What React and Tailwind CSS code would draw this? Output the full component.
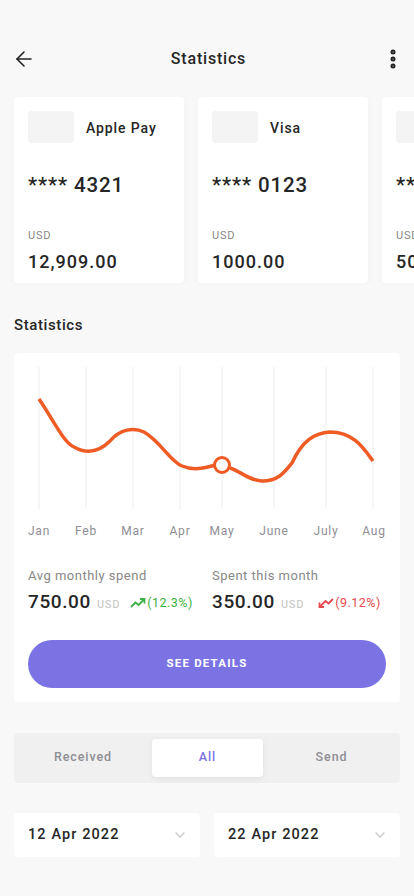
import { ArrowLeft, MoreVertical, ChevronDown } from 'lucide-react'

const cards = [
  { name: 'Apple Pay', num: '**** 4321', amount: '12,909.00' },
  { name: 'Visa', num: '**** 0123', amount: '1000.00' },
  { name: 'Master', num: '**** 7788', amount: '500.00' },
]

const months = ['Jan', 'Feb', 'Mar', 'Apr', 'May', 'June', 'July', 'Aug']
// x positions relative to the chart card (card starts at x=14)
const gridX = [25, 72, 119, 166, 208, 260, 312, 359]

export default function App() {
  return (
    <div className="min-h-[896px] w-[414px] bg-[#f8f8f8] overflow-hidden font-['Roboto',sans-serif] text-[#262626]">
      {/* Header */}
      <div className="flex items-center justify-between h-[58px] mt-[30px] px-3">
        <ArrowLeft className="w-[24px] h-[24px] text-[#222]" strokeWidth={1.6} />
        <h1 className="text-[16px] font-medium tracking-[0.8px]">Statistics</h1>
        <MoreVertical className="w-[24px] h-[24px] -mr-[3px] text-[#222]" strokeWidth={3} />
      </div>

      {/* Cards */}
      <div className="flex gap-[14px] pl-[14px] mt-[9px] overflow-hidden">
        {cards.map((c) => (
          <div key={c.name} className="shrink-0 w-[170px] h-[186px] bg-white rounded-[4px] shadow-[0_2px_8px_rgba(0,0,0,0.03)] px-[14px] pt-[14px]">
            <div className="flex items-center gap-3">
              <div className="w-[46px] h-[32px] rounded-[4px] bg-[#f4f4f4]" />
              <span className="mt-[2px] text-[14px] font-medium tracking-[0.9px] whitespace-nowrap">{c.name}</span>
            </div>
            <p className="mt-[30px] text-[20.5px] font-medium tracking-[0.9px] leading-[24px] whitespace-nowrap">{c.num}</p>
            <p className="mt-[31px] text-[11px] tracking-[0.8px] text-[#888]">USD</p>
            <p className="mt-[3px] text-[18px] font-medium tracking-[1px] whitespace-nowrap">{c.amount}</p>
          </div>
        ))}
      </div>

      {/* Statistics */}
      <h2 className="mt-[31px] px-[14px] text-[15px] font-medium tracking-[0.6px]">Statistics</h2>

      <div className="mx-[14px] mt-[16px] bg-white rounded-[4px] pb-[14px]">
        <div className="relative h-[200px]">
          <svg className="absolute inset-0" width="386" height="200" viewBox="0 0 386 200">
            {gridX.map((x) => (
              <line key={x} x1={x} y1="14" x2={x} y2="156" stroke="#f3f3f3" strokeWidth="1.5" />
            ))}
            <path
              d="M25 46 C40 68, 50 90, 60 94 C74 102, 86 98, 96 88 C106 76, 120 74, 130 79 C146 88, 156 108, 168 113 C182 119, 196 113, 202 112 M216 115 C226 118, 236 128, 248 128 C264 128, 270 120, 278 110 C288 88, 300 80, 316 79 C340 79, 350 96, 359 108"
              fill="none"
              stroke="#ef5b25"
              strokeWidth="3.5"
            />
            <circle cx="208" cy="112" r="7.5" fill="white" stroke="#ef5b25" strokeWidth="3" />
          </svg>
          <div className="absolute left-0 right-0 top-[169px] h-[16px]">
            {months.map((m, i) => (
              <span
                key={m}
                className="absolute text-[12px] tracking-[0.8px] text-[#8e8e94] -translate-x-1/2"
                style={{ left: gridX[i] + (i === 7 ? 1 : 0) }}
              >
                {m}
              </span>
            ))}
          </div>
        </div>

        <div className="flex px-[14px] mt-[13px]">
          <div className="w-[184px]">
            <p className="text-[13px] tracking-[0.5px] text-[#888]">Avg monthly spend</p>
            <div className="flex items-baseline mt-[3px]">
              <span className="text-[19px] font-medium tracking-[0.6px]">750.00</span>
              <span className="ml-[6px] text-[11px] tracking-[0.8px] text-[#c4c4c4]">USD</span>
              <span className="ml-[10px] flex items-center text-[12.5px] tracking-[0.5px] text-[#3cb043]">
                <svg width="16" height="10" viewBox="0 0 16 10" className="mr-[1px]">
                  <path d="M1 9 L5.5 4.5 L8.5 7 L14 1.5" fill="none" stroke="#3cb043" strokeWidth="1.8" />
                  <path d="M10 1 H14.5 V5.5" fill="none" stroke="#3cb043" strokeWidth="1.8" />
                </svg>
                (12.3%)
              </span>
            </div>
          </div>
          <div>
            <p className="text-[13px] tracking-[0.5px] text-[#888]">Spent this month</p>
            <div className="flex items-baseline mt-[3px]">
              <span className="text-[19px] font-medium tracking-[0.6px]">350.00</span>
              <span className="ml-[6px] text-[11px] tracking-[0.8px] text-[#c4c4c4]">USD</span>
              <span className="ml-[14px] flex items-center text-[12.5px] tracking-[0.5px] text-[#e5484d]">
                <svg width="16" height="10" viewBox="0 0 16 10" className="mr-[1px]">
                  <path d="M15 1 L10.5 5.5 L7.5 3 L2 8.5" fill="none" stroke="#e5484d" strokeWidth="1.8" />
                  <path d="M6 9 H1.5 V4.5" fill="none" stroke="#e5484d" strokeWidth="1.8" />
                </svg>
                (9.12%)
              </span>
            </div>
          </div>
        </div>

        <button className="mx-[14px] mt-[23px] w-[358px] h-[48px] rounded-full bg-[#7b73e3] text-white text-[11.5px] font-bold tracking-[1.2px]">
          SEE DETAILS
        </button>
      </div>

      {/* Tabs */}
      <div className="mx-[14px] mt-[31px] h-[50px] bg-[#f0f0f0] rounded-[4px] grid grid-cols-[138px_111px_1fr] items-center">
        <span className="text-center text-[12.5px] font-medium tracking-[0.9px] text-[#8e8e94]">Received</span>
        <span className="h-[38px] flex items-center justify-center bg-white rounded-[4px] shadow-[0_2px_6px_rgba(0,0,0,0.06)] text-[12.5px] font-medium tracking-[0.9px] text-[#7b73e3]">All</span>
        <span className="text-center text-[12.5px] font-medium tracking-[0.9px] text-[#8e8e94]">Send</span>
      </div>

      {/* Date range */}
      <div className="mx-[14px] mt-[30px] grid grid-cols-2 gap-[14px]">
        {['12 Apr 2022', '22 Apr 2022'].map((d) => (
          <div key={d} className="h-[44px] bg-white rounded-[4px] flex items-center justify-between pl-[14px] pr-[12px]">
            <span className="text-[14.5px] font-medium tracking-[1.1px]">{d}</span>
            <ChevronDown className="w-[16px] h-[16px] text-[#c8c8c8]" strokeWidth={2} />
          </div>
        ))}
      </div>
    </div>
  )
}
